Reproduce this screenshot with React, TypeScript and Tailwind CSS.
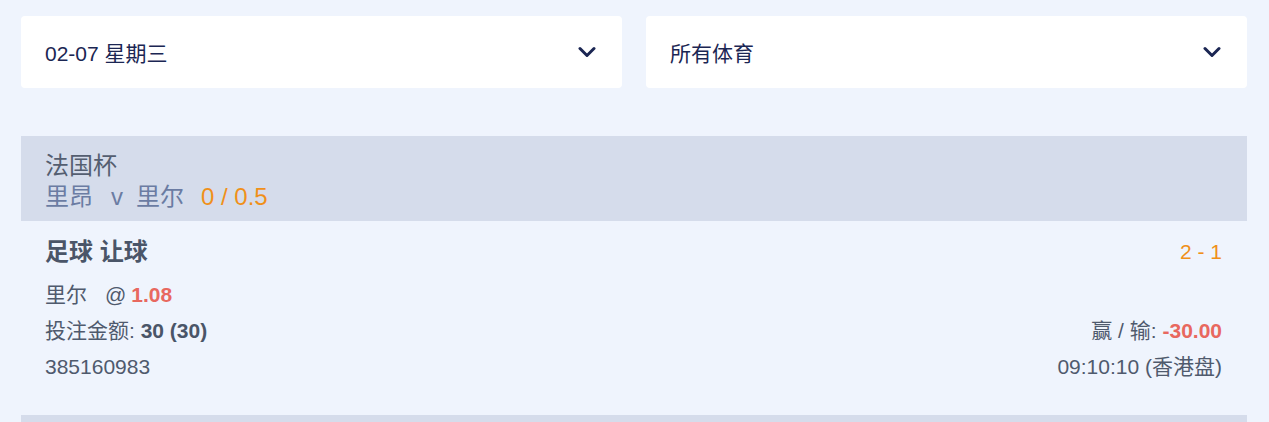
import React from "react";

function Chevron() {
  return (
    <svg width="18" height="14" viewBox="0 0 18 14" className="shrink-0">
      <path d="M2 3.5 L9 10.5 L16 3.5" fill="none" stroke="#1b2653" strokeWidth="3" strokeLinecap="round" strokeLinejoin="round" />
    </svg>
  );
}

function SelectBox({ label }: { label: string }) {
  return (
    <div className="flex-1 h-[72px] bg-white rounded-[4px] flex items-center justify-between pl-[24px] pr-[26px]">
      <span className="text-[21px] text-[#1b2653] leading-none pt-[2px]">{label}</span>
      <Chevron />
    </div>
  );
}

export default function App() {
  return (
    <div
      className="h-[422px] bg-[#eff4fd] pl-[21px] pr-[22px] pt-[16px] overflow-hidden"
      style={{ fontFamily: '"Liberation Sans", "Noto Sans CJK SC", sans-serif' }}
    >
      <div className="flex gap-[24px]">
        <SelectBox label="02-07 星期三" />
        <SelectBox label="所有体育" />
      </div>

      <div className="mt-[48px]">
        <div className="bg-[#d5dceb] pl-[24px] pr-[25px] pt-[14px] pb-[9px] text-[24px] leading-[31px]">
          <div className="text-[#545e70]">法国杯</div>
          <div className="flex items-baseline text-[#6b7ca3]">
            <span>里昂</span>
            <span className="ml-[18px]">v</span>
            <span className="ml-[13px]">里尔</span>
            <span className="ml-[17px] text-[#f0901a]">0 / 0.5</span>
          </div>
        </div>

        <div className="pl-[24px] pr-[25px] pt-[13px] pb-[30px] text-[21px] text-[#4f5a6d]">
          <div className="flex items-center justify-between h-[36px]">
            <span className="text-[24px] font-bold text-[#4a5568]">足球 让球</span>
            <span className="text-[#f0901a]">2 - 1</span>
          </div>
          <div className="mt-[7px] flex items-center h-[36px]">
            <span>里尔</span>
            <span className="ml-[18px]">@</span>
            <span className="ml-[5px] font-bold text-[#e8685f]">1.08</span>
          </div>
          <div className="flex items-center justify-between h-[36px]">
            <span>
              投注金额: <span className="font-bold text-[#4a5568]">30 (30)</span>
            </span>
            <span>
              赢 / 输: <span className="font-bold text-[#e8685f]">-30.00</span>
            </span>
          </div>
          <div className="flex items-center justify-between h-[36px]">
            <span>385160983</span>
            <span>09:10:10 (香港盘)</span>
          </div>
        </div>

        <div className="bg-[#d5dceb] h-[7px]"></div>
      </div>
    </div>
  );
}
